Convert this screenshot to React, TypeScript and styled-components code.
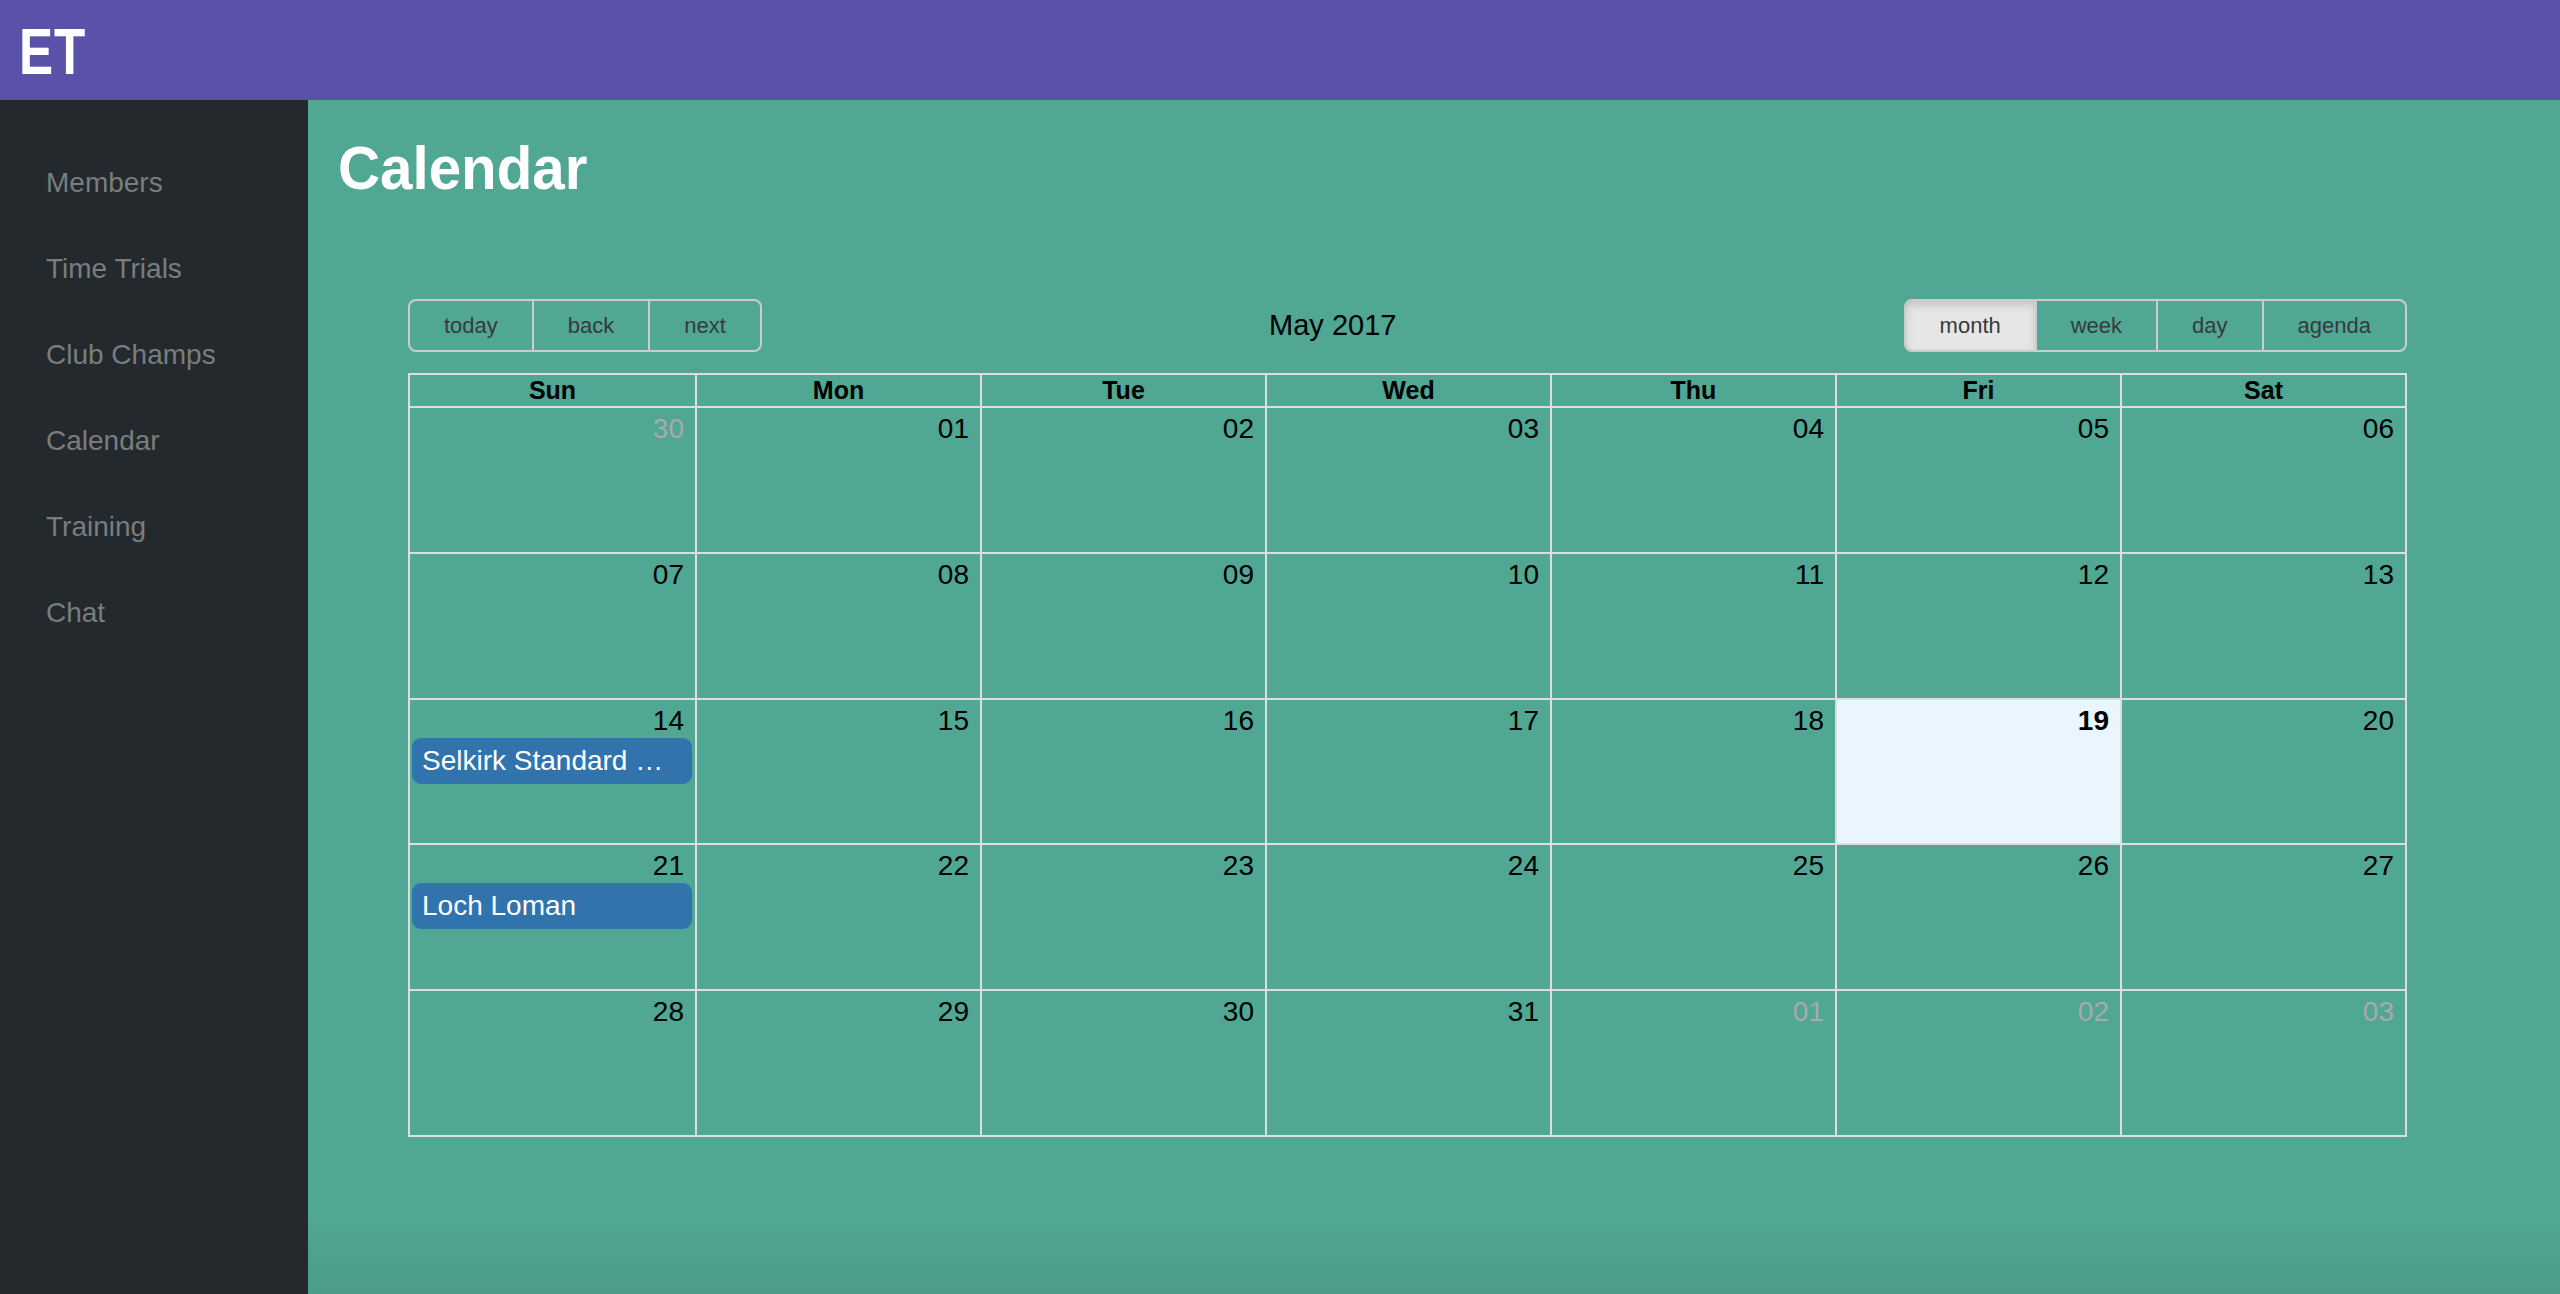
import styled, { createGlobalStyle, css } from "styled-components";

const GlobalStyle = createGlobalStyle`
  html, body {
    margin: 0;
    padding: 0;
    height: 100%;
  }
  body {
    font-family: "Liberation Sans", Arial, sans-serif;
    overflow: hidden;
  }
  * {
    box-sizing: border-box;
  }
`;

const Shell = styled.div`
  display: grid;
  grid-template-rows: 100px 1fr;
  grid-template-columns: 308px 1fr;
  height: 100vh;
`;

const TopBar = styled.header`
  grid-column: 1 / -1;
  background: #5a52a8;
  display: flex;
  align-items: center;
  padding: 4px 0 0 19px;
`;

const Logo = styled.div`
  color: #fff;
  font-size: 64px;
  font-weight: 700;
  letter-spacing: 1px;
  line-height: 1;
  transform: scaleX(0.8);
  transform-origin: left center;
`;

const Sidebar = styled.nav`
  background: #23292c;
  padding-top: 40px;
  display: flex;
  flex-direction: column;
`;

const NavItem = styled.a`
  display: block;
  height: 86px;
  line-height: 86px;
  padding-left: 46px;
  font-size: 28px;
  color: #7a7d7f;
  text-decoration: none;
`;

const Main = styled.main`
  background: linear-gradient(
    to bottom,
    #50a794 0,
    #50a794 calc(100% - 80px),
    #4b9c8a 100%
  );
  display: flex;
  flex-direction: column;
`;

const PageTitle = styled.h1`
  margin: 32px 0 0 30px;
  font-size: 62px;
  line-height: 72px;
  font-weight: 700;
  color: #fff;
  transform: scaleX(0.94);
  transform-origin: left center;
`;

const CalendarWrap = styled.section`
  margin: 95px 0 0 100px;
  width: 1999px;
`;

const Toolbar = styled.div`
  display: flex;
  align-items: center;
  margin-bottom: 21px;
`;

const ButtonGroup = styled.div`
  display: flex;
  border: 2px solid #cccccc;
  border-radius: 8px;
  overflow: hidden;
`;

const ToolButton = styled.button<{ $active?: boolean }>`
  font-family: inherit;
  font-size: 22px;
  height: 49px;
  line-height: 49px;
  padding: 0 34px;
  border: none;
  background: transparent;
  color: #373a3c;
  cursor: pointer;

  & + & {
    border-left: 2px solid #cccccc;
  }

  ${({ $active }) =>
    $active &&
    css`
      background: #e6e6e6;
      box-shadow: inset 0 4px 8px rgba(0, 0, 0, 0.15);
    `}
`;

const Label = styled.span`
  flex: 1;
  text-align: center;
  font-size: 29px;
  color: #000;
`;

const Month = styled.div`
  border: 2px solid #dddddd;
  height: 764px;
  display: flex;
  flex-direction: column;
`;

const HeaderRow = styled.div`
  display: grid;
  grid-template-columns: repeat(7, 1fr);
`;

const HeaderCell = styled.div`
  height: 33px;
  line-height: 31px;
  text-align: center;
  font-size: 25px;
  font-weight: 700;
  color: #000;
  border-bottom: 2px solid #dddddd;

  & + & {
    border-left: 2px solid #dddddd;
  }
`;

const WeekRow = styled.div`
  flex: 1;
  display: grid;
  grid-template-columns: repeat(7, 1fr);
  min-height: 0;

  & + & {
    border-top: 2px solid #dddddd;
  }
`;

const DayCell = styled.div<{ $today?: boolean }>`
  min-width: 0;
  background: ${({ $today }) => ($today ? "#eaf6ff" : "transparent")};

  & + & {
    border-left: 2px solid #dddddd;
  }
`;

const DateNum = styled.div<{ $off?: boolean; $today?: boolean }>`
  text-align: right;
  padding: 4px 11px 0 0;
  font-size: 28px;
  line-height: 34px;
  color: ${({ $off }) => ($off ? "#aaaaaa" : "#000")};
  font-weight: ${({ $today }) => ($today ? 700 : 400)};
`;

const Event = styled.div`
  margin: 0 3px 0 2px;
  height: 46px;
  line-height: 46px;
  padding: 0 10px;
  border-radius: 9px;
  background: #3174ad;
  color: #fff;
  font-size: 28px;
  white-space: nowrap;
  overflow: hidden;
  text-overflow: ellipsis;
`;

type Day = { n: string; off?: boolean; today?: boolean };

const pad = (n: number) => (n < 10 ? `0${n}` : `${n}`);

const buildWeeks = (): Day[][] => {
  const days: Day[] = [{ n: "30", off: true }];
  for (let d = 1; d <= 31; d++) {
    days.push({ n: pad(d), today: d === 19 });
  }
  days.push({ n: "01", off: true }, { n: "02", off: true }, { n: "03", off: true });
  const weeks: Day[][] = [];
  for (let i = 0; i < days.length; i += 7) weeks.push(days.slice(i, i + 7));
  return weeks;
};

const events: Record<string, string> = {
  "14": "Selkirk Standard Weekend",
  "21": "Loch Loman",
};

const navItems = ["Members", "Time Trials", "Club Champs", "Calendar", "Training", "Chat"];
const dayNames = ["Sun", "Mon", "Tue", "Wed", "Thu", "Fri", "Sat"];
const views = ["month", "week", "day", "agenda"];

export default function App() {
  const weeks = buildWeeks();

  return (
    <>
      <GlobalStyle />
      <Shell>
        <TopBar>
          <Logo>ET</Logo>
        </TopBar>
        <Sidebar>
          {navItems.map((item) => (
            <NavItem key={item} href="#">
              {item}
            </NavItem>
          ))}
        </Sidebar>
        <Main>
          <PageTitle>Calendar</PageTitle>
          <CalendarWrap>
            <Toolbar>
              <ButtonGroup>
                <ToolButton type="button">today</ToolButton>
                <ToolButton type="button">back</ToolButton>
                <ToolButton type="button">next</ToolButton>
              </ButtonGroup>
              <Label>May 2017</Label>
              <ButtonGroup>
                {views.map((v) => (
                  <ToolButton key={v} type="button" $active={v === "month"}>
                    {v}
                  </ToolButton>
                ))}
              </ButtonGroup>
            </Toolbar>
            <Month>
              <HeaderRow>
                {dayNames.map((d) => (
                  <HeaderCell key={d}>{d}</HeaderCell>
                ))}
              </HeaderRow>
              {weeks.map((week, wi) => (
                <WeekRow key={wi}>
                  {week.map((day, di) => {
                    const ev = !day.off ? events[day.n] : undefined;
                    return (
                      <DayCell key={di} $today={day.today}>
                        <DateNum $off={day.off} $today={day.today}>
                          {day.n}
                        </DateNum>
                        {ev && <Event title={ev}>{ev}</Event>}
                      </DayCell>
                    );
                  })}
                </WeekRow>
              ))}
            </Month>
          </CalendarWrap>
        </Main>
      </Shell>
    </>
  );
}
